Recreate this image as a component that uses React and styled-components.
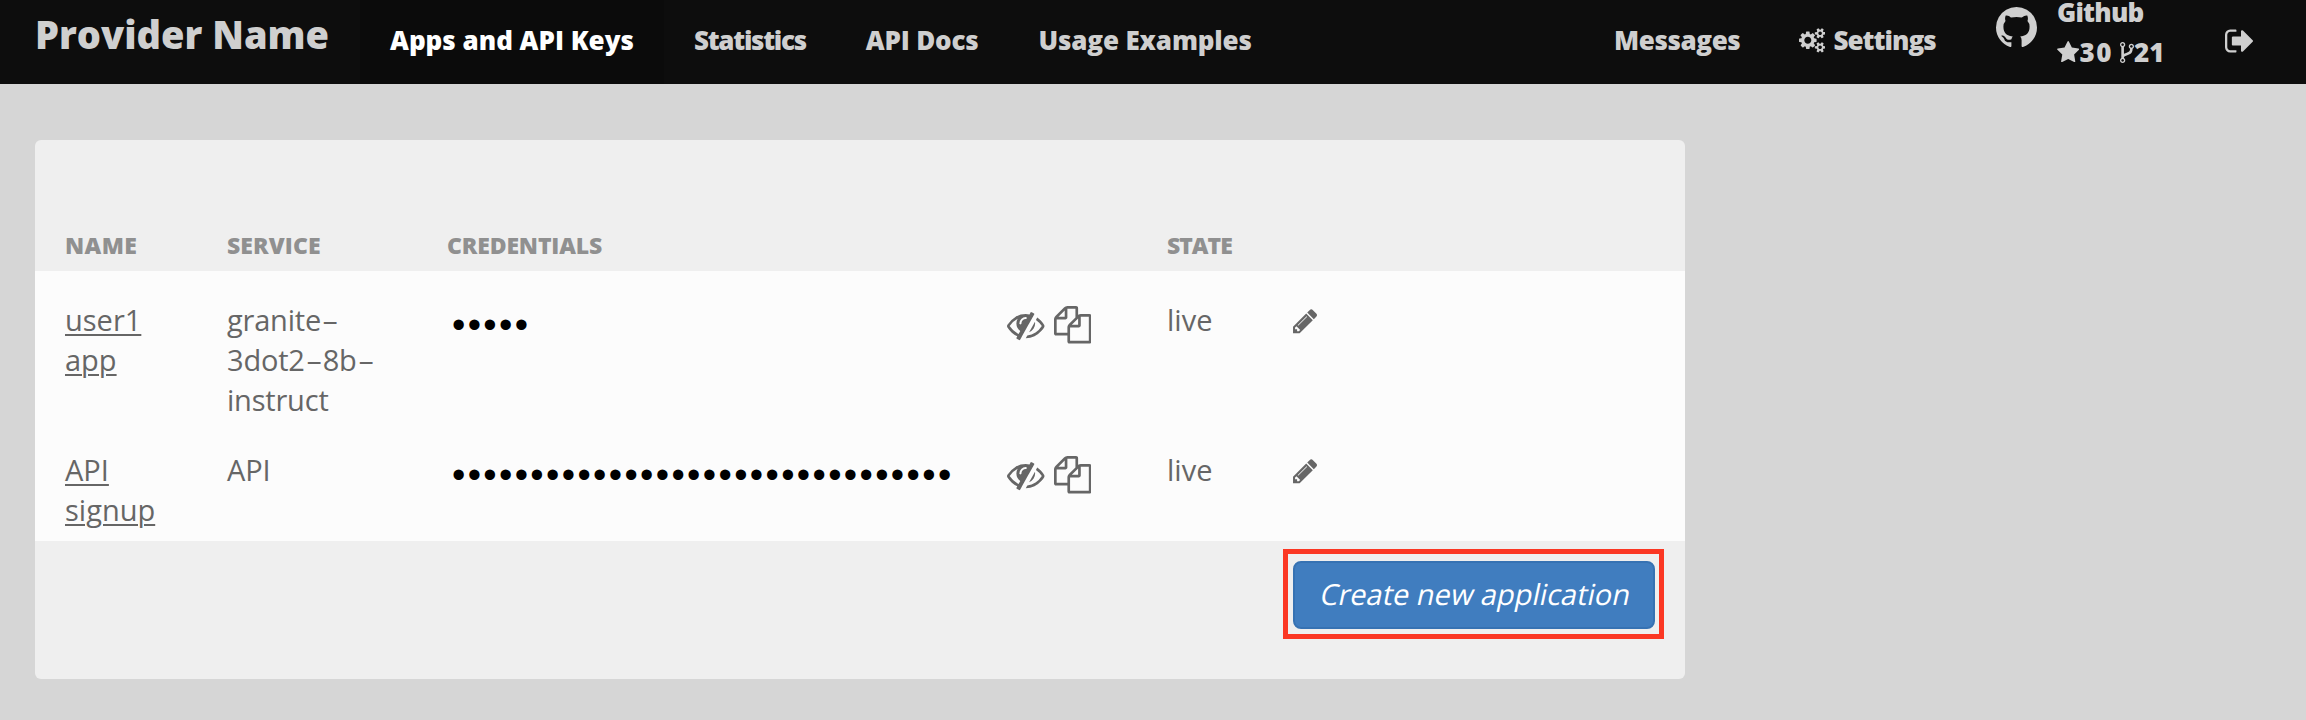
import React from 'react';
import styled, { createGlobalStyle } from 'styled-components';

const GlobalStyle = createGlobalStyle`
  * { box-sizing: border-box; }
  html, body { margin: 0; background: #d6d6d6; }
  body {
    font-family: "Open Sans", "Noto Sans", sans-serif;
    font-size: 29px;
    font-weight: 500;
    line-height: 40px;
    color: #666;
  }
`;

const Page = styled.div`
  height: 720px;
  overflow: hidden;
`;

const Navbar = styled.header`
  display: flex;
  align-items: flex-start;
  height: 84px;
  background: #0d0d0d;
  color: #cfcfcf;
  font-size: 26px;
  font-weight: 800;
  white-space: nowrap;
`;

const Brand = styled.a`
  width: 360px;
  padding-left: 35px;
  font-size: 38px;
  line-height: 68px;
`;

const NavLink = styled.a`
  height: 84px;
  padding: 0 30px;
  line-height: 81px;
  letter-spacing: ${(p) => p.$tracking || 0}px;
  color: ${(p) => (p.$active ? '#fff' : 'inherit')};
  background: ${(p) => (p.$active ? '#0b0b0b' : 'transparent')};
`;

const NavRight = styled.div`
  display: flex;
  margin-left: auto;
`;

const NavItem = styled.a`
  display: flex;
  align-items: flex-start;
  width: ${(p) => p.$width}px;
  height: 84px;
  padding-left: 30px;
  line-height: 81px;
  letter-spacing: ${(p) => p.$tracking || 0}px;
`;

const Icon = styled.svg`
  display: block;
  flex: none;
  fill: currentColor;
  width: ${(p) => p.$w}px;
  height: ${(p) => p.$h}px;
  margin-top: ${(p) => p.$top || 0}px;
  margin-right: ${(p) => p.$right || 0}px;
`;

const RepoInfo = styled.div`
  margin-top: -8px;
  line-height: 40px;
`;

const RepoName = styled.div`
  height: 40px;
  letter-spacing: -0.8px;
`;

const RepoCounts = styled.div`
  display: flex;
  align-items: flex-start;
`;

const Count = styled.span`
  width: ${(p) => p.$width}px;
  letter-spacing: ${(p) => p.$tracking || 0}px;
`;

const Panel = styled.main`
  width: 1650px;
  height: 539px;
  margin: 56px 0 0 35px;
  padding-top: 90px;
  border-radius: 6px;
  background: #efefef;
`;

const Row = styled.div`
  display: grid;
  grid-template-columns: 162px 220px 560px 160px 124px 1fr;
  padding-left: 30px;
`;

const HeadRow = styled(Row)`
  height: 41px;
  color: #909090;
  font-size: 23px;
  font-weight: 800;
  line-height: 30px;
`;

const HeadCell = styled.div`
  letter-spacing: ${(p) => p.$tracking || 0}px;
`;

const Body = styled.div`
  height: 270px;
  background: #fcfcfc;
`;

const AppRow = styled(Row)`
  height: 150px;
  padding-top: 29px;
`;

const Name = styled.a`
  display: block;
  width: 100px;
  text-decoration: underline;
  text-decoration-thickness: 2px;
  text-underline-offset: 3px;
`;

const Service = styled.div`
  width: 160px;
  letter-spacing: -0.2px;
`;

const Hyphen = styled.span`
  display: inline-block;
  width: 18px;
  text-align: center;
  transform: scaleX(1.8);
`;

const Secret = styled.div`
  height: 40px;
  padding: 5px 0 0 5px;
  color: #000;
  font-family: "Liberation Sans", sans-serif;
  font-size: 38px;
  font-weight: 400;
  letter-spacing: 2.37px;
  white-space: nowrap;
`;

const Actions = styled.div`
  display: flex;
  gap: 9px;
  padding-top: 6px;
`;

const Footer = styled.div`
  display: flex;
  justify-content: flex-end;
  padding: 8px 21px 0 0;
`;

const Highlight = styled.div`
  width: 381px;
  height: 90px;
  padding: 7px 0 0 5px;
  border: 5px solid #fb3723;
`;

const Button = styled.button`
  display: block;
  width: 362px;
  height: 68px;
  padding: 0 0 3px 3px;
  border: 2px solid #3672b3;
  border-radius: 8px;
  background: #407dbf;
  color: #fff;
  font: inherit;
  line-height: 40px;
`;

const Slanted = styled.span`
  display: inline-block;
  transform: skewX(-12deg);
`;

const paths = {
  github:
    'M896 128q209 0 385.500 103t279.500 279.500 103 385.500q0 251-146.500 451.500t-378.500 277.500q-27 5-40-7t-13-30q0-3 .5-76.500t.5-134.500q0-97-52-142 57-6 102.500-18t94-39 81-66.500 53-105 20.500-150.500q0-119-79-206 37-91-8-204-28-9-81 11t-92 44l-38 24q-93-26-192-26t-192 26q-16-11-42.500-27t-83.500-38.500-85-13.500q-45 113-8 204-79 87-79 206 0 85 20.500 150t52.500 105 80.500 67 94 39 102.500 18q-39 36-49 103-21 10-45 15t-57 5-65.500-21.500-55.500-62.500q-19-32-48.500-52t-49.500-24l-20-3q-21 0-29 4.500t-5 11.500 9 14 13 12l7 5q22 10 43.500 38t31.500 51l10 23q13 38 44 61.500t67 30 69.500 7 55.500-3.500l23-4q0 38 .5 88.500t.5 54.500q0 18-13 30t-40 7q-232-77-378.500-277.500t-146.500-451.500q0-209 103-385.500t279.500-279.500 385.500-103z',
  cogs:
    'M832 896q0-106-75-181t-181-75-181 75-75 181 75 181 181 75 181-75 75-181zm768 512q0-52-38-90t-90-38-90 38-38 90q0 53 37.500 90.500t90.500 37.500 90.500-37.500 37.500-90.500zm0-1024q0-52-38-90t-90-38-90 38-38 90q0 53 37.500 90.500t90.500 37.500 90.500-37.500 37.500-90.500zm-384 421v185q0 10-7 19.500t-16 10.500l-155 24q-11 35-32 76 34 48 90 115 7 11 7 20 0 12-7 19-23 30-82.500 89.500t-78.500 59.500q-11 0-21-7l-115-90q-37 19-77 31-11 108-23 155-7 24-30 24h-186q-11 0-20-7.500t-10-17.500l-23-153q-34-10-75-31l-118 89q-7 7-20 7-11 0-21-8-144-133-144-160 0-9 7-19 10-14 41-53t47-61q-23-44-35-82l-152-24q-10-1-17-9.500t-7-19.500v-185q0-10 7-19.500t16-10.500l155-24q11-35 32-76-34-48-90-115-7-11-7-20 0-12 7-20 22-30 82-89t79-59q11 0 21 7l115 90q34-18 77-32 11-108 23-154 7-24 30-24h186q11 0 20 7.500t10 17.500l23 153q34 10 75 31l118-89q8-7 20-7 11 0 21 8 144 133 144 160 0 8-7 19-12 16-42 54t-45 60q23 48 34 82l152 23q10 2 17 10.500t7 19.500zm640 533v140q0 16-149 31-12 27-30 52 51 113 51 138 0 4-4 7-122 71-124 71-8 0-46-47t-52-68q-20 2-30 2t-30-2q-14 21-52 68t-46 47q-2 0-124-71-4-3-4-7 0-25 51-138-18-25-30-52-149-15-149-31v-140q0-16 149-31 13-29 30-52-51-113-51-138 0-4 4-7 4-2 35-20t59-34 30-16q8 0 46 46.500t52 67.500q20-2 30-2t30 2q51-71 92-112l6-2q4 0 124 70 4 3 4 7 0 25-51 138 17 23 30 52 149 15 149 31zm0-1024v140q0 16-149 31-12 27-30 52 51 113 51 138 0 4-4 7-122 71-124 71-8 0-46-47t-52-68q-20 2-30 2t-30-2q-14 21-52 68t-46 47q-2 0-124-71-4-3-4-7 0-25 51-138-18-25-30-52-149-15-149-31v-140q0-16 149-31 13-29 30-52-51-113-51-138 0-4 4-7 4-2 35-20t59-34 30-16q8 0 46 46.500t52 67.500q20-2 30-2t30 2q51-71 92-112l6-2q4 0 124 70 4 3 4 7 0 25-51 138 17 23 30 52 149 15 149 31z',
  star:
    'M1728 647q0 22-26 48l-363 354 86 500q1 7 1 20 0 21-10.500 35.500t-30.500 14.500q-19 0-40-12l-449-236-449 236q-22 12-40 12-21 0-31.500-14.500t-10.500-35.500q0-6 2-20l86-500-364-354q-25-27-25-48 0-37 56-46l502-73 225-455q19-41 49-41t49 41l225 455 502 73q56 9 56 46z',
  fork:
    'M672 1472q0-40-28-68t-68-28-68 28-28 68 28 68 68 28 68-28 28-68zm0-1152q0-40-28-68t-68-28-68 28-28 68 28 68 68 28 68-28 28-68zm640 128q0-40-28-68t-68-28-68 28-28 68 28 68 68 28 68-28 28-68zm96 0q0 52-26 96.500t-70 69.500q-2 287-226 414-67 38-203 81-128 40-169.500 71t-41.500 100v26q44 25 70 69.500t26 96.500q0 80-56 136t-136 56-136-56-56-136q0-52 26-96.500t70-69.500v-820q-44-25-70-69.500t-26-96.500q0-80 56-136t136-56 136 56 56 136q0 52-26 96.500t-70 69.500v497q54-26 154-57 55-17 87.500-29.500t70.500-31 59-39.500 40.500-51 28-69.500 8.500-91.500q-44-25-70-69.500t-26-96.500q0-80 56-136t136-56 136 56 56 136z',
  signOut:
    'M704 1440q0 4 1 20t.5 26.500-3 23.500-10 19.500-20.500 6.500h-320q-119 0-203.500-84.500t-84.500-203.500v-704q0-119 84.500-203.500t203.500-84.500h320q13 0 22.500 9.500t9.500 22.500q0 4 1 20t.5 26.500-3 23.500-10 19.500-20.500 6.500h-320q-66 0-113 47t-47 113v704q0 66 47 113t113 47h312l11.500 1 11.500 3 8 5.500 7 9 2 13.500zm928-544q0 26-19 45l-544 544q-19 19-45 19t-45-19-19-45v-288h-448q-26 0-45-19t-19-45v-384q0-26 19-45t45-19h448v-288q0-26 19-45t45-19 45 19l544 544q19 19 19 45z',
  eyeSlash:
    'M555 1335l78-141q-87-63-136-159t-49-203q0-121 61-225-229 117-381 353 167 258 427 375zm389-759q0-20-14-34t-34-14q-125 0-214.500 89.500t-89.500 214.500q0 20 14 34t34 14 34-14 14-34q0-86 61-147t147-61q20 0 34-14t14-34zm363-191q0 7-1 9-106 189-316 567t-315 566l-49 89q-10 16-28 16-12 0-134-70-16-10-16-28 0-12 44-87-143-65-263.500-173t-208.500-245q-20-31-20-69t20-69q153-235 380-371t496-136q89 0 180 17l54-97q10-16 28-16 5 0 18 6t31 15.500 33 18.500 31.500 18.500 19.500 11.500q16 10 16 27zm37 447q0 139-79 253.500t-209 164.500l280-502q8 45 8 84zm448 128q0 35-20 69-39 64-109 145-150 172-347.500 267t-419.500 95l74-132q212-18 392.500-137t301.500-307q-115-179-282-294l63-112q95 64 182.500 153t144.500 184q20 34 20 69z',
  files:
    'M1696 384q40 0 68 28t28 68v1216q0 40-28 68t-68 28h-960q-40 0-68-28t-28-68v-288h-544q-40 0-68-28t-28-68v-672q0-40 20-88t48-76l408-408q28-28 76-48t88-20h416q40 0 68 28t28 68v328q68-40 128-40h416zm-544 213l-299 299h299v-299zm-640-384l-299 299h299v-299zm196 647l316-316v-416h-384v416q0 40-28 68t-68 28h-416v640h512v-256q0-40 20-88t48-76zm956 804v-1152h-384v416q0 40-28 68t-68 28h-416v640h896z',
  pencil:
    'M491 1536l91-91-235-235-91 91v107h128v128h107zm523-928q0-22-22-22-10 0-17 7l-542 542q-7 7-7 17 0 22 22 22 10 0 17-7l542-542q7-7 7-17zm-54-192l416 416-832 832h-416v-416zm683 96q0 53-37 90l-166 166-416-416 166-165q36-38 90-38 53 0 91 38l235 234q37 39 37 91z',
};

function Glyph({ name, box = '0 0 1792 1792', w, h = w, top, right }) {
  return (
    <Icon viewBox={box} $w={w} $h={h} $top={top} $right={right} aria-hidden="true">
      <path d={paths[name]} />
    </Icon>
  );
}

const applications = [
  { name: 'user1 app', service: 'granite-3dot2-8b-instruct', keyLength: 5, state: 'live' },
  { name: 'API signup', service: 'API', keyLength: 32, state: 'live' },
];

function ServiceName({ text }) {
  const parts = text.split('-');
  return parts.map((part, i) => (
    <React.Fragment key={part}>
      {part}
      {i < parts.length - 1 && <Hyphen>-</Hyphen>}
    </React.Fragment>
  ));
}

export default function App() {
  return (
    <Page>
      <GlobalStyle />
      <Navbar>
        <Brand>Provider Name</Brand>
        <NavLink $active>Apps and API Keys</NavLink>
        <NavLink $tracking={-1.3}>Statistics</NavLink>
        <NavLink $tracking={-0.2}>API Docs</NavLink>
        <NavLink $tracking={-0.15}>Usage Examples</NavLink>
        <NavRight>
          <NavItem $width={185} $tracking={-0.4}>Messages</NavItem>
          <NavItem $width={197} $tracking={-0.95}>
            <Glyph name="cogs" box="-64 0 1920 1792" w={26.4} h={24.6} top={28.2} right={8} />
            Settings
          </NavItem>
          <NavItem $width={229}>
            <Glyph name="github" box="128 128 1536 1536" w={41} top={7} right={20} />
            <RepoInfo>
              <RepoName>Github</RepoName>
              <RepoCounts>
                <Glyph name="star" box="64 32 1664 1587" w={22.4} h={21.2} top={9} />
                <Count $width={40.5} $tracking={1.5}>30</Count>
                <Glyph name="fork" box="384 128 1024 1536" w={14} h={21} top={10} />
                <Count $width={34}>21</Count>
              </RepoCounts>
            </RepoInfo>
          </NavItem>
          <NavItem $width={111}>
            <Glyph name="signOut" box="64 0 1568 1792" w={28} h={32} top={24.5} />
          </NavItem>
        </NavRight>
      </Navbar>
      <Panel>
        <HeadRow>
          <HeadCell $tracking={0.4}>NAME</HeadCell>
          <HeadCell $tracking={0.1}>SERVICE</HeadCell>
          <HeadCell $tracking={-0.15}>CREDENTIALS</HeadCell>
          <HeadCell />
          <HeadCell $tracking={-1}>STATE</HeadCell>
          <HeadCell />
        </HeadRow>
        <Body>
          {applications.map((app) => (
            <AppRow key={app.name}>
              <Name>{app.name}</Name>
              <Service>
                <ServiceName text={app.service} />
              </Service>
              <Secret>{'•'.repeat(app.keyLength)}</Secret>
              <Actions>
                <Glyph name="eyeSlash" w={37.5} />
                <Glyph name="files" w={37.5} />
              </Actions>
              <div>{app.state}</div>
              <Glyph name="pencil" w={28.4} top={7} />
            </AppRow>
          ))}
        </Body>
        <Footer>
          <Highlight>
            <Button>
              <Slanted>Create new application</Slanted>
            </Button>
          </Highlight>
        </Footer>
      </Panel>
    </Page>
  );
}
